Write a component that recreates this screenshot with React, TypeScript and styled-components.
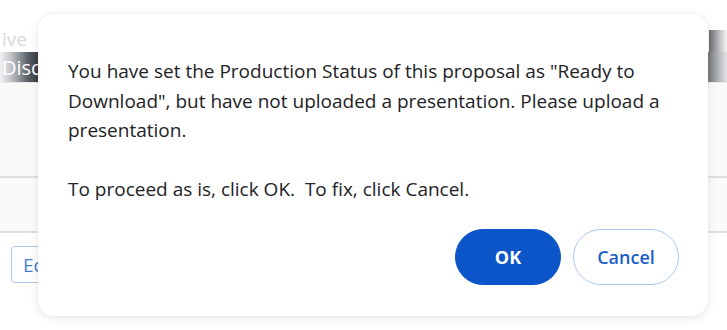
import React from "react";
import styled, { createGlobalStyle } from "styled-components";

const Global = createGlobalStyle`
  html, body { margin: 0; padding: 0; background: #ffffff; }
  body { width: 727px; height: 330px; overflow: hidden; font-family: "Open Sans", "Noto Sans", sans-serif; }
`;

const Page = styled.div`
  position: relative;
  width: 727px;
  height: 330px;
  overflow: hidden;
  background: #ffffff;
`;

const Backdrop = styled.div`
  display: flex;
  flex-direction: column;
  width: 100%;
  height: 100%;
  opacity: 0.9;
`;

const Crumb = styled.div`
  height: 52px;
  box-sizing: border-box;
  padding: 26px 0 0 2px;
  font-size: 19px;
  color: #d4d4d8;
  display: flex;
  justify-content: space-between;
`;

const RightDark = styled.div`
  width: 18px;
  margin-top: 4px;
  height: 52px;
  background: linear-gradient(to right, #5a5d62, #d8d8da 80%, #f4f4f4);
`;

const HeaderBar = styled.div`
  height: 30px;
  display: flex;
  align-items: center;
  padding-left: 2px;
  font-size: 20px;
  color: #ffffff;
  background: linear-gradient(to right, #f0f1f3 0px, #b4b8bd 12px, #4a5058 28px, #22282f 38px, #22282f 690px, #70757a 710px, #e4e4e6 727px);
  border-bottom: 1px solid #e6e6e6;
`;

const Row = styled.div<{ $h: number }>`
  height: ${(p) => p.$h}px;
  border-bottom: 2px solid #dcdcdc;
  background: #fafafa;
`;

const ActionRow = styled.div`
  padding: 13px 0 0 11px;
`;

const GhostButton = styled.div`
  width: 60px;
  height: 37px;
  box-sizing: border-box;
  border: 1px solid #a9c2e6;
  border-radius: 4px;
  display: flex;
  align-items: center;
  padding-left: 11px;
  font-size: 19px;
  color: #2f6fc4;
  background: #ffffff;
`;

const Dialog = styled.div`
  position: absolute;
  left: 38px;
  top: 14px;
  width: 670px;
  height: 302px;
  box-sizing: border-box;
  background: #ffffff;
  border-radius: 16px;
  box-shadow: 0 2px 10px rgba(0, 0, 0, 0.1), 0 0 2px rgba(0, 0, 0, 0.06);
  padding: 43px 29px 31px 30px;
  display: flex;
  flex-direction: column;
`;

const Message = styled.p`
  margin: 0;
  font-size: 19px;
  line-height: 29.5px;
  color: #222226;
  white-space: nowrap;
`;

const Spacer = styled.div`
  height: 29.5px;
`;

const Actions = styled.div`
  margin-top: auto;
  display: flex;
  justify-content: flex-end;
  gap: 12px;
`;

const Button = styled.button<{ $primary?: boolean }>`
  width: 106px;
  height: 56px;
  border-radius: 28px;
  font-family: "Open Sans", "Noto Sans", sans-serif;
  font-size: 18px;
  font-weight: ${(p) => (p.$primary ? 700 : 600)};
  cursor: pointer;
  background: ${(p) => (p.$primary ? "#0b55c8" : "#ffffff")};
  color: ${(p) => (p.$primary ? "#ffffff" : "#1b5ec9")};
  border: 1px solid ${(p) => (p.$primary ? "#0b55c8" : "#a9c6f2")};
`;

export default function App() {
  return (
    <Page>
      <Global />
      <Backdrop>
        <Crumb>
          <span>ive</span>
          <RightDark />
        </Crumb>
        <HeaderBar>Disq</HeaderBar>
        <Row $h={93} />
        <Row $h={53} />
        <ActionRow>
          <GhostButton>Ed</GhostButton>
        </ActionRow>
      </Backdrop>
      <Dialog role="dialog">
        <Message>
          You have set the Production Status of this proposal as "Ready to
          <br />
          Download", but have not uploaded a presentation. Please upload a
          <br />
          presentation.
        </Message>
        <Spacer />
        <Message>To proceed as is, click OK.&nbsp; To fix, click Cancel.</Message>
        <Actions>
          <Button $primary>OK</Button>
          <Button>Cancel</Button>
        </Actions>
      </Dialog>
    </Page>
  );
}
